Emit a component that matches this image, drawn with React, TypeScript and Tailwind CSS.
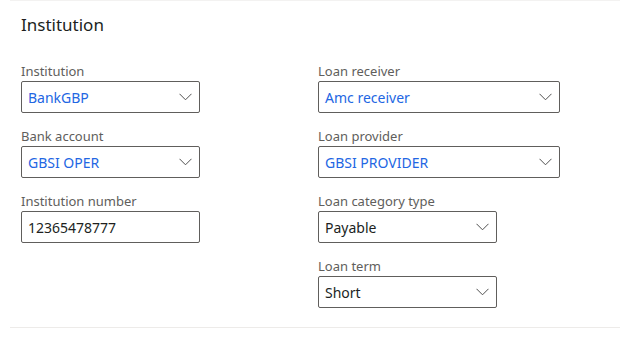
import React from "react";

const Chevron = () => (
  <svg width="13" height="8" viewBox="0 0 13 8" fill="none" className="shrink-0">
    <path d="M0.5 0.8 L6.5 6.8 L12.5 0.8" stroke="#505050" strokeWidth="1" />
  </svg>
);

type FieldProps = { label: string; value: string; link?: boolean; select?: boolean; width: string };

const Field = ({ label, value, link, select = true, width }: FieldProps) => (
  <div className="flex flex-col mb-[13px]">
    <div className="h-[20px] leading-[20px] text-[13px] text-[#605e5c]">{label}</div>
    <div
      className={`${width} h-[32px] border border-[#605e5c] rounded-[2px] flex items-center pl-[6px] pr-[7px] justify-between`}
    >
      <span className={`text-[14px] ${link ? "text-[#2266e3]" : "text-[#201f1e]"}`}>{value}</span>
      {select && <Chevron />}
    </div>
  </div>
);

export default function App() {
  return (
    <div
      className="w-[620px] h-[340px] bg-white overflow-hidden"
      style={{ fontFamily: '"Segoe UI", "Noto Sans", "Open Sans", sans-serif' }}
    >
      <div className="ml-[10px] border-t border-[#f3f2f1]" />
      <div className="ml-[10px] border-b border-[#edebe9] h-[327px] pl-[11px]">
        <div className="pt-[12px] h-[60px] text-[17px] text-[#201f1e] leading-[24px]">Institution</div>
        <div className="grid grid-cols-[297px_1fr]">
          <div className="flex flex-col">
            <Field label="Institution" value="BankGBP" link width="w-[179px]" />
            <Field label="Bank account" value="GBSI OPER" link width="w-[179px]" />
            <Field label="Institution number" value="12365478777" select={false} width="w-[179px]" />
          </div>
          <div className="flex flex-col">
            <Field label="Loan receiver" value="Amc receiver" link width="w-[242px]" />
            <Field label="Loan provider" value="GBSI PROVIDER" link width="w-[242px]" />
            <Field label="Loan category type" value="Payable" width="w-[179px]" />
            <Field label="Loan term" value="Short" width="w-[179px]" />
          </div>
        </div>
      </div>
    </div>
  );
}
